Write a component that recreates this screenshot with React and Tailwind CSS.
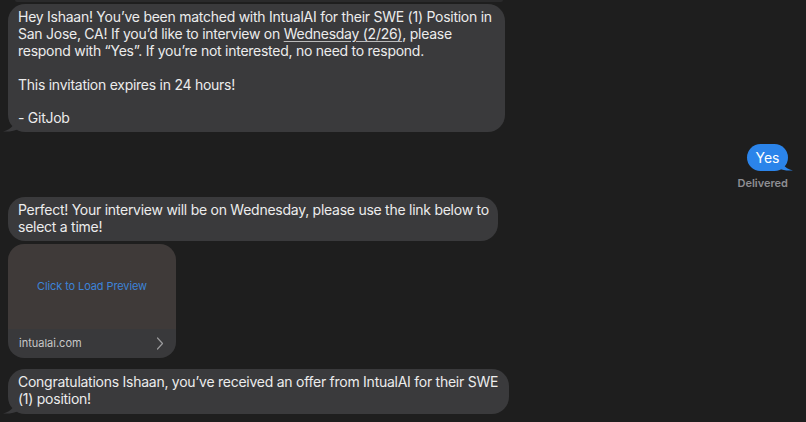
import React from "react";

function TailLeft() {
  return (
    <svg className="absolute left-[-6px] bottom-0" width="20" height="16" viewBox="0 0 20 16">
      <path d="M14 0 C14 8 10 13 1 15.5 C7 16 13 15 18 12 L18 0 Z" fill="#3a3a3c" />
    </svg>
  );
}

function TailRight() {
  return (
    <svg className="absolute right-[-6px] bottom-0" width="20" height="16" viewBox="0 0 20 16">
      <path d="M6 0 C6 8 10 13 19 15.5 C13 16 7 15 2 12 L2 0 Z" fill="#2b84ea" />
    </svg>
  );
}

export default function App() {
  const font = { fontFamily: "Inter, 'Helvetica Neue', Arial, sans-serif" };
  return (
    <div
      className="w-[806px] h-[422px] overflow-hidden bg-[#1e1e1e] relative flex flex-col"
      style={font}
    >
      <div className="absolute top-0 left-[15px] w-[488px] h-[2px] bg-[#2a2a2b] rounded-b" />
      <div className="pl-[8px] pt-[4px]">
        <div className="relative w-[497px] h-[128px] rounded-[17px] bg-[#3a3a3c] pl-[10px] pr-[8px] pt-[5px] text-[14px] leading-[16.9px] text-[#ececec] tracking-[-0.26px] whitespace-nowrap">
          <TailLeft />
          <div className="relative">
            Hey Ishaan! You’ve been matched with IntualAI for their SWE (1) Position in
            <br />
            San Jose, CA! If you’d like to interview on{" "}
            <span className="underline underline-offset-2 decoration-[#bbbbbb]">Wednesday (2/26)</span>, please
            <br />
            respond with “Yes”. If you’re not interested, no need to respond.
            <br />
            <br />
            This invitation expires in 24 hours!
            <br />
            <br />- GitJob
          </div>
        </div>
      </div>

      <div className="flex flex-col items-end pr-[18px] mt-[12px]">
        <div className="relative h-[27px] w-[41px] rounded-[14px] bg-[#2b84ea] flex items-center justify-center text-[14px] text-white">
          <TailRight />
          <span className="relative">Yes</span>
        </div>
        <div className="mt-[5px] text-[11px] font-semibold text-[#8e8e93] leading-[14px]">Delivered</div>
      </div>

      <div className="pl-[8px] mt-[7px] flex flex-col gap-[3px]">
        <div className="relative w-[490px] h-[44px] rounded-[17px] bg-[#3a3a3c] pl-[10px] pt-[5px] text-[14px] leading-[16.9px] text-[#ececec] tracking-[-0.26px] whitespace-nowrap">
          Perfect! Your interview will be on Wednesday, please use the link below to
          <br />
          select a time!
        </div>
        <div className="w-[168px] h-[114px] rounded-[16px] overflow-hidden flex flex-col">
          <div className="flex-1 bg-[#3f3a39] flex items-center justify-center pb-[1px] text-[11px] tracking-[-0.1px] text-[#3d83d8]">
            Click to Load Preview
          </div>
          <div className="h-[29px] bg-[#39393b] flex items-center justify-between pl-[11px] pr-[12px] text-[11px] text-[#c8c8c8]">
            <span>intualai.com</span>
            <svg width="8" height="13" viewBox="0 0 8 13">
              <path d="M1.5 1 L6.5 6.5 L1.5 12" fill="none" stroke="#9a9a9c" strokeWidth="1.2" strokeLinecap="round" strokeLinejoin="round" />
            </svg>
          </div>
        </div>
      </div>

      <div className="pl-[8px] mt-[11px]">
        <div className="relative w-[501px] h-[45px] rounded-[17px] bg-[#3a3a3c] pl-[10px] pt-[5px] text-[14px] leading-[16.9px] text-[#ececec] tracking-[-0.26px] whitespace-nowrap">
          <TailLeft />
          <div className="relative">
            Congratulations Ishaan, you’ve received an offer from IntualAI for their SWE
            <br />
            (1) position!
          </div>
        </div>
      </div>
    </div>
  );
}
